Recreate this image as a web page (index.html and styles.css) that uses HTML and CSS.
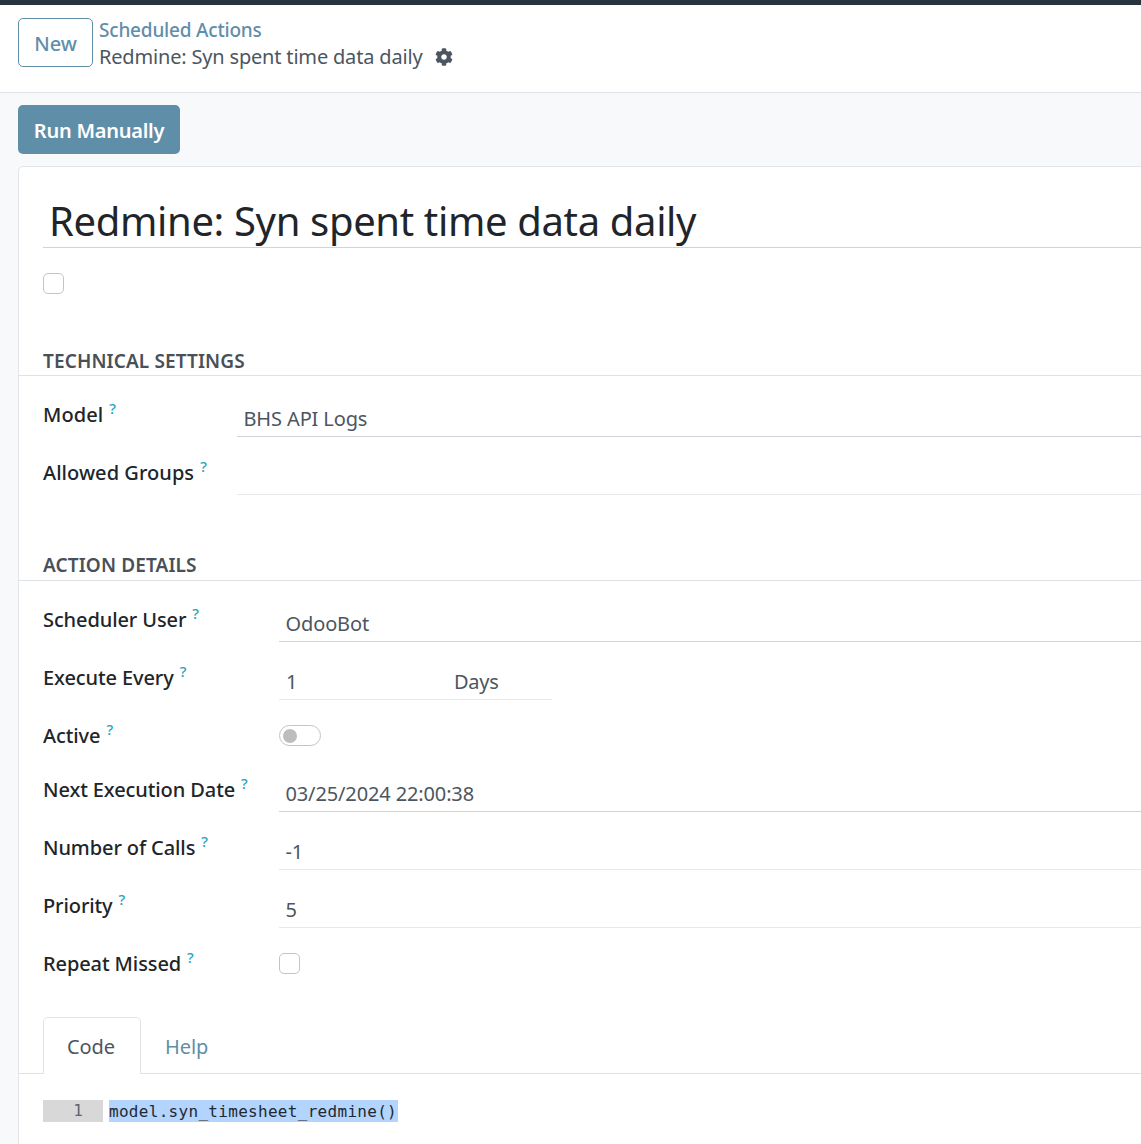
FILE: index.html
```html
<!DOCTYPE html>
<html lang="en">
<head>
<meta charset="utf-8">
<title>Redmine: Syn spent time data daily</title>
<link rel="stylesheet" href="styles.css">
</head>
<body>
<div class="topbar"></div>
<header class="control">
  <button class="btn-new">New</button>
  <div class="crumbs">
    <a class="crumb-link">Scheduled Actions</a>
    <div class="crumb-current">
      <span>Redmine: Syn spent time data daily</span>
      <svg class="gear" viewBox="0 0 512 512" width="18" height="18"><path fill="#4c5660" d="M487.4 315.7l-42.6-24.6c4.3-23.2 4.3-47 0-70.2l42.6-24.6c4.900-2.800 7.100-8.600 5.500-14-11.100-35.600-30-67.800-54.700-94.600-3.800-4.100-10-5.100-14.800-2.300L380.800 110c-17.900-15.400-38.500-27.300-60.800-35.100V25.800c0-5.600-3.900-10.500-9.400-11.700-36.700-8.200-74.300-7.800-109.200 0-5.500 1.200-9.400 6.100-9.400 11.700V75c-22.200 7.900-42.800 19.800-60.800 35.100L88.700 85.500c-4.900-2.800-11-1.900-14.800 2.300-24.700 26.700-43.600 58.900-54.700 94.600-1.700 5.400.6 11.200 5.500 14L67.300 221c-4.300 23.200-4.300 47 0 70.200l-42.600 24.600c-4.900 2.800-7.100 8.600-5.500 14 11.100 35.600 30 67.800 54.700 94.600 3.800 4.100 10 5.100 14.800 2.300l42.600-24.600c17.900 15.400 38.500 27.300 60.800 35.100v49.200c0 5.600 3.900 10.500 9.400 11.700 36.700 8.200 74.300 7.800 109.200 0 5.500-1.200 9.400-6.100 9.400-11.700v-49.200c22.200-7.900 42.800-19.800 60.800-35.100l42.600 24.600c4.900 2.800 11 1.900 14.800-2.300 24.700-26.700 43.600-58.900 54.700-94.600 1.500-5.500-.7-11.300-5.600-14.100zM256 336c-44.100 0-80-35.900-80-80s35.900-80 80-80 80 35.900 80 80-35.900 80-80 80z"/></svg>
    </div>
  </div>
</header>
<main class="content">
  <div class="actions"><button class="btn-run">Run Manually</button></div>
  <section class="sheet">
    <h1 class="title">Redmine: Syn spent time data daily</h1>
    <div class="title-check"><span class="checkbox"></span></div>

    <h2 class="group-head group-first">TECHNICAL SETTINGS</h2>
    <div class="rows rows-tech">
      <div class="row"><div class="label">Model<sup>?</sup></div><div class="field">BHS API Logs</div></div>
      <div class="row"><div class="label">Allowed Groups<sup>?</sup></div><div class="field field-faint"></div></div>
    </div>

    <h2 class="group-head group-second">ACTION DETAILS</h2>
    <div class="rows rows-action">
      <div class="row"><div class="label">Scheduler User<sup>?</sup></div><div class="field">OdooBot</div></div>
      <div class="row"><div class="label">Execute Every<sup>?</sup></div>
        <div class="field-pair"><span class="pair-num">1</span><span class="pair-unit">Days</span></div></div>
      <div class="row row-short"><div class="label">Active<sup>?</sup></div><div class="toggle-cell"><span class="toggle"><span class="knob"></span></span></div></div>
      <div class="row"><div class="label">Next Execution Date<sup>?</sup></div><div class="field">03/25/2024 22:00:38</div></div>
      <div class="row"><div class="label">Number of Calls<sup>?</sup></div><div class="field field-faint">-1</div></div>
      <div class="row"><div class="label">Priority<sup>?</sup></div><div class="field field-faint">5</div></div>
      <div class="row"><div class="label">Repeat Missed<sup>?</sup></div><div class="toggle-cell"><span class="checkbox"></span></div></div>
    </div>

    <nav class="tabs">
      <a class="tab tab-active">Code</a>
      <a class="tab">Help</a>
    </nav>
    <div class="code">
      <span class="gutter">1</span><span class="code-line"><span class="selected">model.syn_timesheet_redmine()</span></span>
    </div>
  </section>
</main>
</body>
</html>
```
FILE: styles.css
```css
* { box-sizing: border-box; }
html, body { margin: 0; height: 100%; }
body {
  width: 1141px;
  height: 1144px;
  overflow: hidden;
  background: #f8f9fb;
  font-family: "Noto Sans", "Open Sans", sans-serif;
  font-size: 20px;
  color: #212529;
}
.topbar { height: 5px; background: #26343f; }
.control {
  height: 88px;
  background: #fff;
  border-bottom: 1px solid #dfe2e5;
  padding: 13px 18px 0;
  display: flex;
  align-items: flex-start;
  gap: 6px;
}
.btn-new {
  width: 75px;
  height: 49px;
  background: #fff;
  border: 1px solid #5f8ea9;
  border-radius: 5px;
  color: #5f8ea9;
  font: 500 20px "Noto Sans", sans-serif;
  letter-spacing: -0.1px;
  padding: 2px 0 0;
}
.crumbs { display: flex; flex-direction: column; margin-top: -1px; }
.crumb-link { color: #5f8ea9; font-weight: 500; font-size: 19px; line-height: 26px; letter-spacing: -0.2px; }
.crumb-current { display: flex; align-items: center; gap: 13px; color: #4c5660; font-size: 20px; line-height: 27px; letter-spacing: -0.18px; }
.gear { display: block; }
.content { padding: 12px 0 0 18px; }
.actions { height: 61px; }
.btn-run {
  width: 162px;
  height: 49px;
  background: #5f8ea9;
  border: 0;
  border-radius: 5px;
  color: #fff;
  font: 600 20px "Noto Sans", sans-serif;
  letter-spacing: -0.25px;
  padding: 2px 0 0;
}
.sheet {
  width: 1200px;
  height: 1000px;
  background: #fff;
  border: 1px solid #e2e4e7;
  border-radius: 5px 0 0 0;
  padding-top: 26px;
}
.title {
  margin: 0 0 0 24px;
  height: 55px;
  padding-left: 6px;
  border-bottom: 1px solid #ced4da;
  font-size: 40px;
  font-weight: 400;
  line-height: 55px;
  letter-spacing: -0.35px;
  color: #212529;
}
.title-check { margin: 25px 0 0 24px; height: 21px; }
.checkbox {
  display: block;
  width: 21px;
  height: 21px;
  background: #fff;
  border: 1px solid #bfc5cb;
  border-radius: 5px;
}
.group-head {
  margin: 0;
  height: 28px;
  padding-left: 24px;
  font-size: 19px;
  line-height: 26px;
  font-weight: 600;
  color: #495057;
  letter-spacing: 0.12px;
  border-bottom: 1px solid #dee2e6;
}
.group-first { margin-top: 54px; }
.group-second { margin-top: 45px; height: 30px; line-height: 28px; }
.rows { display: flex; flex-direction: column; margin-left: 24px; }
.rows-tech { --label: 194px; --field: 47px; --label-top: 11px; --text-top: 15px; --label-ls: 0.05px; margin-top: 14px; }
.rows-action { --label: 236px; --field: 48px; --label-top: 12px; --text-top: 16px; --label-ls: -0.1px; margin-top: 13px; }
.row { display: flex; height: 58px; }
.row-short { height: 54px; }
.label {
  width: var(--label);
  flex: none;
  padding-top: var(--label-top);
  font-weight: 500;
  font-size: 20px;
  line-height: 27px;
  letter-spacing: var(--label-ls);
  color: #212529;
}
.label sup { color: #2aa3bd; font-size: 15px; font-weight: 500; line-height: 0; margin-left: 6px; position: relative; top: 0; vertical-align: super; }
.field {
  flex: 1;
  height: var(--field);
  padding: var(--text-top) 0 0 6.5px;
  line-height: 27px;
  color: #4c5660;
  border-bottom: 1px solid #ced4da;
  font-size: 20px;
  letter-spacing: -0.13px;
}
.field-faint { border-bottom-color: #e6e8eb; }
.field-pair {
  width: 273px;
  height: var(--field);
  padding-top: var(--text-top);
  display: flex;
  line-height: 27px;
  color: #4c5660;
  border-bottom: 1px solid #e6e8eb;
  letter-spacing: -0.27px;
}
.pair-num { width: 175px; padding-left: 7px; }
.toggle-cell { padding-top: 15px; }
.toggle {
  display: flex;
  align-items: center;
  width: 42px;
  height: 21px;
  border: 1px solid #bfc5cb;
  border-radius: 11px;
  background: #fff;
  padding-left: 3px;
}
.knob { width: 14px; height: 14px; border-radius: 50%; background: #bdbdbd; }
.tabs {
  display: flex;
  height: 57px;
  margin-top: 21px;
  padding-left: 24px;
  border-bottom: 1px solid #dee2e6;
}
.tab {
  height: 57px;
  padding: 15px 24px 0;
  line-height: 27px;
  color: #5f8ea9;
  letter-spacing: -0.1px;
  border: 1px solid transparent;
  border-bottom: 0;
}
.tab-active {
  width: 98px;
  background: #fff;
  color: #4c5660;
  border-color: #e2e4e7;
  border-radius: 5px 5px 0 0;
  margin-bottom: -1px;
  padding-left: 23px;
}
.tab-active + .tab { padding-left: 23px; }
.code {
  display: flex;
  margin: 26px 0 0 24px;
  height: 22px;
  font-family: "DejaVu Sans Mono", "Liberation Mono", monospace;
  font-size: 16px;
  line-height: 22px;
}
.gutter {
  width: 60px;
  background: #d8d8d8;
  color: #5c6670;
  text-align: right;
  padding-right: 20px;
}
.code-line { padding-left: 6px; }
.selected { display: inline-block; height: 22px; background: #b3d4fc; padding: 1px 1px 0 0; line-height: 22px; color: #1f2933; letter-spacing: 0.3px; }
```
